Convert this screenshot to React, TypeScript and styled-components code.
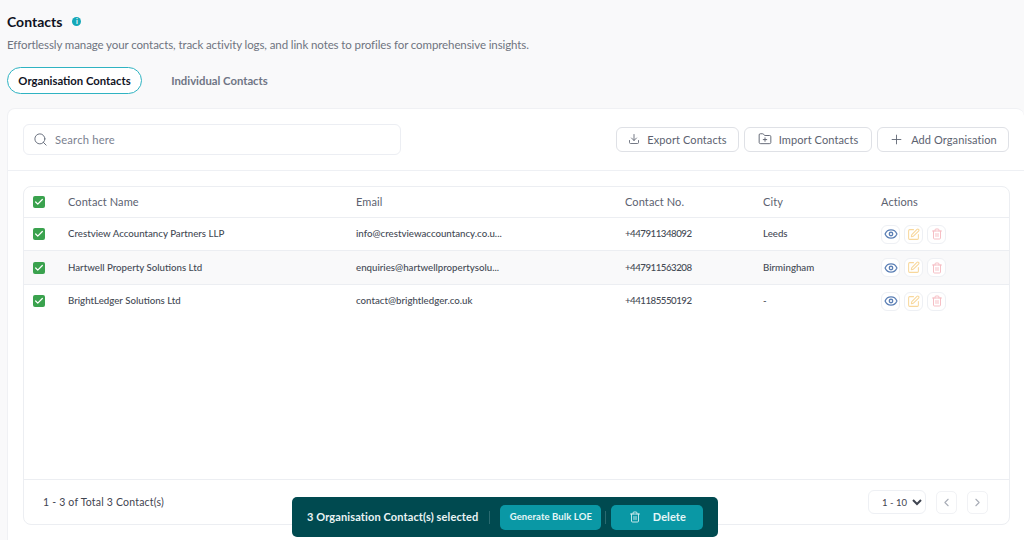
import styled, { createGlobalStyle } from "styled-components"
import { Search, Download, FolderPlus, Plus, Eye, SquarePen, Trash2, ChevronLeft, ChevronRight, Check } from "lucide-react"

const contacts = [
    { name: "Crestview Accountancy Partners LLP", email: "info@crestviewaccountancy.co.u...", phone: "+447911348092", city: "Leeds" },
    { name: "Hartwell Property Solutions Ltd", email: "enquiries@hartwellpropertysolu...", phone: "+447911563208", city: "Birmingham" },
    { name: "BrightLedger Solutions Ltd", email: "contact@brightledger.co.uk", phone: "+441185550192", city: "-" },
]

const GlobalStyle = createGlobalStyle`
    html, body {
        margin: 0;
        padding: 0;
        background: #f9f9fa;
    }
    * {
        box-sizing: border-box;
    }
`

const App = () => {
    return (
        <Page>
            <GlobalStyle />
            <TitleRow>
                <Title>Contacts</Title>
                <InfoDot>i</InfoDot>
            </TitleRow>
            <Subtitle>Effortlessly manage your contacts, track activity logs, and link notes to profiles for comprehensive insights.</Subtitle>
            <Tabs>
                <Tab $active>Organisation Contacts</Tab>
                <Tab>Individual Contacts</Tab>
            </Tabs>
            <Card>
                <Toolbar>
                    <SearchBox>
                        <Search size={15} color="#6b7280" strokeWidth={1.6} />
                        <span>Search here</span>
                    </SearchBox>
                    <Actions>
                        <ToolButton $width={123}><Download size={12} strokeWidth={1.7} />Export Contacts</ToolButton>
                        <ToolButton $width={128}><FolderPlus size={14} strokeWidth={1.6} />Import Contacts</ToolButton>
                        <ToolButton $width={132}><Plus size={15} strokeWidth={1.4} />Add Organisation</ToolButton>
                    </Actions>
                </Toolbar>
                <TablePanel>
                    <HeadRow>
                        <CheckBox><Check size={10} strokeWidth={3} color="#fff" /></CheckBox>
                        <span>Contact Name</span>
                        <span>Email</span>
                        <span>Contact No.</span>
                        <span>City</span>
                        <span>Actions</span>
                    </HeadRow>
                    {contacts.map((el, i) => (
                        <BodyRow key={i} $shaded={i === 1}>
                            <CheckBox><Check size={10} strokeWidth={3} color="#fff" /></CheckBox>
                            <span>{el.name}</span>
                            <span>{el.email}</span>
                            <Phone>{el.phone}</Phone>
                            <span>{el.city}</span>
                            <RowActions>
                                <IconButton $color="#5b7fb5"><Eye size={14} strokeWidth={2.2} /></IconButton>
                                <IconButton $color="#f8d79b"><SquarePen size={13} strokeWidth={1.9} /></IconButton>
                                <IconButton $color="#f6bcc2"><Trash2 size={12} strokeWidth={1.9} /></IconButton>
                            </RowActions>
                        </BodyRow>
                    ))}
                    <Footer>
                        <span>1 - 3 of Total 3 Contact(s)</span>
                        <Pager>
                            <PageSelect defaultValue="1 - 10">
                                <option>1 - 10</option>
                            </PageSelect>
                            <PagerButton><ChevronLeft size={13} /></PagerButton>
                            <PagerButton><ChevronRight size={13} /></PagerButton>
                        </Pager>
                    </Footer>
                </TablePanel>
            </Card>
            <BulkBar>
                <BulkLabel>3 Organisation Contact(s) selected</BulkLabel>
                <Divider />
                <BulkButton $width={101}>Generate Bulk LOE</BulkButton>
                <Divider $tight />
                <BulkButton $width={92} $large><Trash2 size={12} strokeWidth={1.7} />Delete</BulkButton>
            </BulkBar>
        </Page>
    )
}

export default App

const Page = styled.div`
    position: relative;
    width: 1024px;
    height: 540px;
    overflow: hidden;
    padding: 13px 0 0 7px;
    font-family: "Lato", "Noto Sans", sans-serif;
    background: #f9f9fa;
`

const TitleRow = styled.div`
    display: flex;
    align-items: center;
    gap: 10px;
    height: 17px;
`

const Title = styled.h1`
    margin: 0;
    font-size: 14px;
    font-weight: 700;
    color: #0f1222;
`

const InfoDot = styled.span`
    display: flex;
    align-items: center;
    justify-content: center;
    width: 9px;
    height: 9px;
    margin-top: -1px;
    border-radius: 50%;
    background: #14a8b8;
    color: #fff;
    font-size: 7px;
    font-weight: 700;
`

const Subtitle = styled.p`
    margin: 7px 0 0;
    height: 15px;
    line-height: 15px;
    font-size: 11.5px;
    letter-spacing: -0.1px;
    color: #6f7480;
`

const Tabs = styled.div`
    display: flex;
    align-items: center;
    gap: 2px;
    margin-top: 15px;
`

const Tab = styled.div<{ $active?: boolean }>`
    display: flex;
    align-items: center;
    justify-content: center;
    width: ${(p) => (p.$active ? "135px" : "151px")};
    height: 27px;
    padding-bottom: 1px;
    border-radius: 14px;
    font-size: 11.3px;
    font-weight: 700;
    color: ${(p) => (p.$active ? "#11131f" : "#6f7585")};
    background: ${(p) => (p.$active ? "#fff" : "transparent")};
    border: ${(p) => (p.$active ? "1.5px solid #2fb3c2" : "none")};
`

const Card = styled.section`
    margin-top: 14px;
    width: 1017px;
    height: 440px;
    background: #fff;
    border: 1px solid #f0f1f4;
    border-right: none;
    border-radius: 8px 8px 0 0;
`

const Toolbar = styled.div`
    display: flex;
    align-items: center;
    justify-content: space-between;
    height: 62px;
    padding: 0 15px 0 15px;
    border-bottom: 1px solid #eef0f4;
`

const SearchBox = styled.div`
    display: flex;
    align-items: center;
    gap: 7px;
    width: 378px;
    height: 31px;
    padding: 0 0 1px 9px;
    background: #fff;
    border: 1px solid #eceef3;
    border-radius: 6px;
    font-size: 11.2px;
    letter-spacing: 0.2px;
    color: #7b8190;
`

const Actions = styled.div`
    display: flex;
    gap: 5px;
`

const ToolButton = styled.div<{ $width: number }>`
    display: flex;
    align-items: center;
    justify-content: center;
    gap: 7px;
    width: ${(p) => p.$width}px;
    height: 25px;
    padding-bottom: 1px;
    border: 1px solid #dfe1e6;
    border-radius: 6px;
    background: #fff;
    font-size: 11px;
    letter-spacing: 0.1px;
    color: #5c6270;
`

const TablePanel = styled.div`
    position: relative;
    width: 987px;
    height: 339px;
    margin: 15px 0 0 15px;
    border: 1px solid #eceef2;
    border-radius: 8px;
`

const HeadRow = styled.div`
    display: grid;
    grid-template-columns: 44px 288px 269px 138px 118px 1fr;
    align-items: center;
    height: 31px;
    font-size: 11px;
    letter-spacing: 0.1px;
    color: #5c6270;
    border-bottom: 1px solid #eceef2;
    span {
        margin-top: -2px;
    }
`

const BodyRow = styled.div<{ $shaded?: boolean }>`
    display: grid;
    grid-template-columns: 44px 288px 269px 138px 118px 1fr;
    align-items: center;
    height: 33.4px;
    font-size: 9.7px;
    font-weight: 500;
    color: #444a55;
    background: ${(p) => (p.$shaded ? "#f9f9fa" : "#fff")};
    border-bottom: 1px solid #eceef2;
    span {
        margin-top: -2px;
    }
    &:nth-child(4) {
        border-bottom: none;
    }
`

const Phone = styled.span`
    letter-spacing: -0.5px;
`

const CheckBox = styled.div`
    display: flex;
    align-items: center;
    justify-content: center;
    width: 12px;
    height: 12px;
    margin-left: 9px;
    border-radius: 2px;
    background: #3aa24e;
`

const RowActions = styled.div`
    display: flex;
    gap: 4px;
`

const IconButton = styled.div<{ $color: string }>`
    display: flex;
    align-items: center;
    justify-content: center;
    width: 19px;
    height: 19px;
    border: 1px solid #eef0f4;
    border-radius: 6px;
    background: #fff;
    color: ${(p) => p.$color};
`

const Footer = styled.div`
    position: absolute;
    left: 0;
    right: 0;
    bottom: 0;
    display: flex;
    align-items: center;
    justify-content: space-between;
    height: 45px;
    padding: 0 21px 0 19px;
    border-top: 1px solid #eceef2;
    font-size: 10.5px;
    letter-spacing: 0.2px;
    color: #3f4450;
`

const Pager = styled.div`
    display: flex;
    align-items: center;
    gap: 10px;
`

const PageSelect = styled.select`
    width: 58px;
    height: 24px;
    border: 1px solid #eef0f4;
    border-radius: 6px;
    background: #fff;
    font-family: inherit;
    font-size: 9.5px;
    font-weight: 400;
    color: #3f4450;
    padding-left: 9px;
`

const PagerButton = styled.div`
    display: flex;
    align-items: center;
    justify-content: center;
    width: 21px;
    height: 23px;
    border: 1px solid #f1f2f5;
    border-radius: 5px;
    color: #a8adb7;
`

const BulkBar = styled.div`
    position: absolute;
    left: 292px;
    top: 497px;
    display: flex;
    align-items: center;
    width: 426px;
    height: 40px;
    padding-left: 15px;
    background: #004a50;
    border-radius: 5px;
    color: #fff;
`

const BulkLabel = styled.span`
    margin-top: -2px;
    font-size: 11px;
    font-weight: 700;
    letter-spacing: 0.12px;
    color: #eaf4f5;
    white-space: nowrap;
`

const Divider = styled.i<{ $tight?: boolean }>`
    width: 1px;
    height: 13px;
    margin: ${(p) => (p.$tight ? "0 5px 0 4px" : "0 10px 0 11px")};
    background: #2a6a70;
`

const BulkButton = styled.div<{ $width: number; $large?: boolean }>`
    display: flex;
    align-items: center;
    justify-content: center;
    gap: 12px;
    width: ${(p) => p.$width}px;
    height: 25px;
    padding-bottom: 1px;
    background: #0a98a5;
    border-radius: 5px;
    font-size: ${(p) => (p.$large ? "11px" : "9.5px")};
    font-weight: 700;
    letter-spacing: 0.1px;
    color: #e6f6f7;
    white-space: nowrap;
`
